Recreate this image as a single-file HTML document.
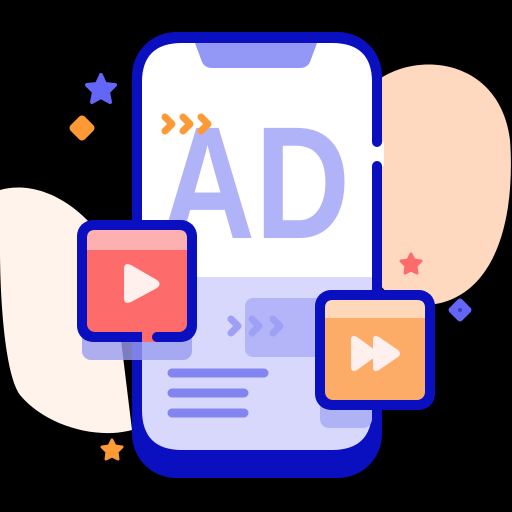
<!DOCTYPE html>
<html><head><style>html,body{margin:0;padding:0;background:#000;width:512px;height:512px;overflow:hidden}</style></head>
<body>
<svg width="512" height="512" viewBox="0 0 512 512" xmlns="http://www.w3.org/2000/svg">
<rect width="512" height="512" fill="#000"/>
<path d="M378 80 C420 50 500 60 510 140 C515 210 500 280 450 300 C420 312 385 300 378 280 Z" fill="#fed9bf"/>
<path d="M0 190 C35 180 80 200 110 250 L132 430 C95 440 45 425 20 395 C5 375 0 300 0 250 Z" fill="#fff3ec"/>
<path d="M101 75 l4 9 10 1 -7 7 2 10 -9 -5 -9 5 2 -10 -7 -7 10 -1z" fill="#6366f6" stroke="#6366f6" stroke-width="4" stroke-linejoin="round"/>
<rect x="72" y="118" width="20" height="20" rx="4" transform="rotate(45 82 128)" fill="#fd9a35"/>
<path d="M411 254 l3 6 7 1 -5 5 1 7 -6 -3 -6 3 1 -7 -5 -5 7 -1z" fill="#fe6b6b" stroke="#fe6b6b" stroke-width="3" stroke-linejoin="round"/>
<path d="M112 440 l3 6 7 1 -5 5 1 7 -6 -3 -6 3 1 -7 -5 -5 7 -1z" fill="#fd9a35" stroke="#fd9a35" stroke-width="3" stroke-linejoin="round"/>
<rect x="451" y="301" width="18" height="18" rx="3" transform="rotate(45 460 310)" fill="#6366f6"/>
<circle cx="460" cy="310" r="2" fill="#3d40b0"/>
<rect x="132" y="32" width="250" height="446" rx="44" fill="#0a0fbf"/>
<path d="M142 277 V82 Q142 43 182 43 H332 Q372 43 372 82 V277 Z" fill="#fff"/>
<path d="M142 277 H372 V410 Q372 450 332 450 H182 Q142 450 142 410 Z" fill="#d7d8fb"/>
<rect x="372" y="142" width="12" height="24" fill="#fff"/>
<circle cx="377" cy="142" r="5" fill="#0a0fbf"/><circle cx="377" cy="166" r="5" fill="#0a0fbf"/>
<path d="M195 43 H317 L310 62 Q307 68 300 68 H212 Q205 68 202 62 Z" fill="#9397f5"/>
<text x="160" y="238" font-family="Liberation Sans, sans-serif" font-weight="bold" font-size="160" fill="#b1b3f8" textLength="190" lengthAdjust="spacingAndGlyphs">AD</text>
<g fill="none" stroke="#fd9a35" stroke-width="7" stroke-linecap="round" stroke-linejoin="round">
<path d="M165 117 l7 7 -7 7M183 117 l7 7 -7 7M201 117 l7 7 -7 7"/></g>
<rect x="245" y="298" width="90" height="59" rx="8" fill="#b3b5f8"/>
<g fill="none" stroke="#9ea0f5" stroke-width="7" stroke-linecap="round" stroke-linejoin="round">
<path d="M231 319 l7 7 -7 7M252 319 l7 7 -7 7M273 319 l7 7 -7 7"/></g>
<g stroke="#8284f0" stroke-width="9" stroke-linecap="round"><path d="M172 373H264M172 393H244M172 413H244"/></g>
<rect x="82" y="318" width="110" height="42" rx="9" fill="#9a9cf0" opacity="0.8"/>
<rect x="320" y="380" width="52" height="48" rx="9" fill="#b0b2f6"/>
<rect x="77" y="220" width="120" height="122" rx="16" fill="#0a0fbf"/>
<rect x="87" y="230" width="100" height="102" rx="8" fill="#fe6b6b"/>
<path d="M87 250 V238 Q87 230 95 230 H179 Q187 230 187 238 V250 Z" fill="#feb0b0"/>
<rect x="142" y="331" width="14" height="11" fill="#fe6b6b"/>
<circle cx="157" cy="337" r="5" fill="#0a0fbf"/>
<path d="M124 269 Q124 262 131 265 L157 280 Q162 284 157 288 L131 302 Q124 305 124 298 Z" fill="#fff0ee"/>
<rect x="315" y="290" width="120" height="120" rx="16" fill="#0a0fbf"/>
<rect x="325" y="300" width="100" height="100" rx="8" fill="#fdac68"/>
<path d="M325 318 V308 Q325 300 333 300 H417 Q425 300 425 308 V318 Z" fill="#fed8b8"/>
<path d="M351 340 Q351 334 357 337 L375 350 Q379 354 375 357 L357 370 Q351 373 351 367 Z" fill="#fff0ee"/>
<path d="M373 340 Q373 334 379 337 L398 350 Q402 354 398 357 L379 370 Q373 373 373 367 Z" fill="#fff0ee"/>
</svg>
</body></html>
